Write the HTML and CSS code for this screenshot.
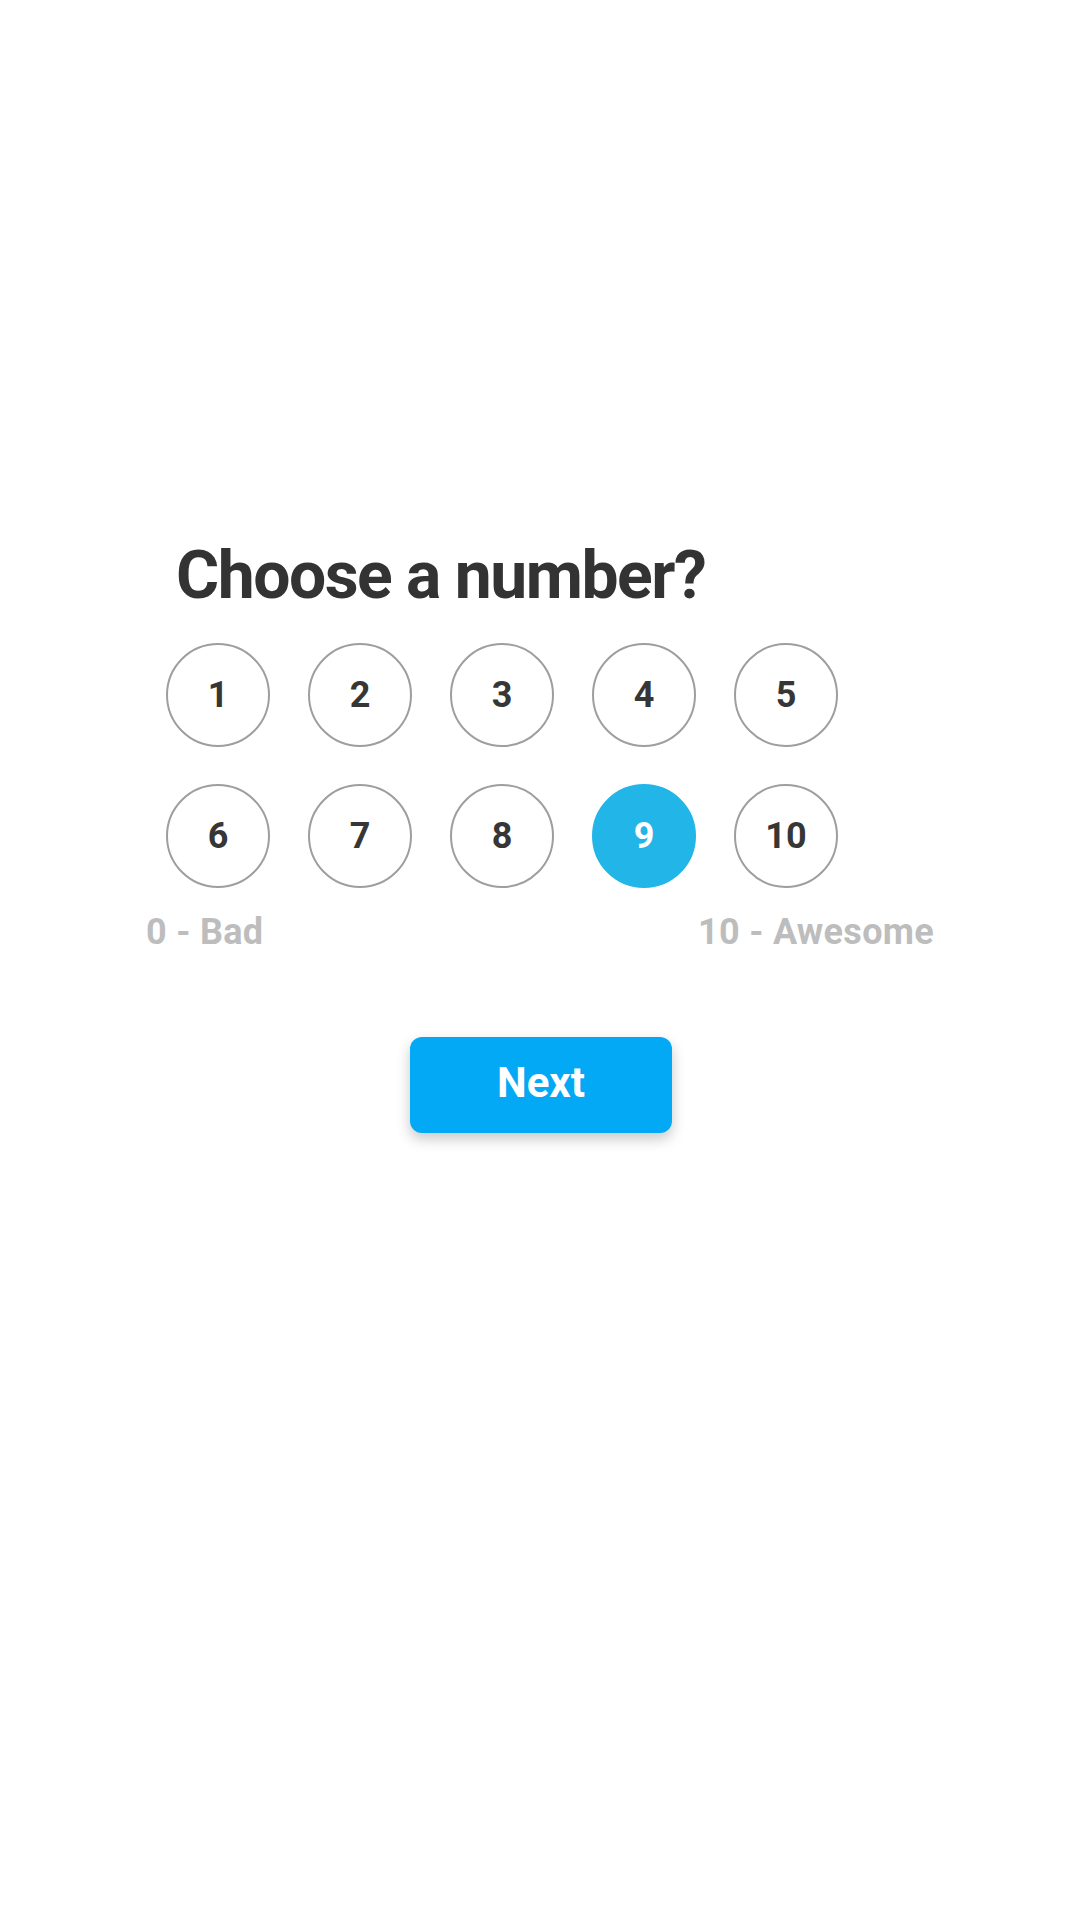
FILE: index.html
```html
<!DOCTYPE html>
<html lang="en">
<head>
<meta charset="utf-8">
<title>Choose a number</title>
<link rel="stylesheet" href="styles.css">
</head>
<body>
<main class="survey">
  <h1 class="title">Choose a number?</h1>
  <div class="choices">
    <button class="choice">1</button>
    <button class="choice">2</button>
    <button class="choice">3</button>
    <button class="choice">4</button>
    <button class="choice">5</button>
    <button class="choice">6</button>
    <button class="choice">7</button>
    <button class="choice">8</button>
    <button class="choice choice--selected">9</button>
    <button class="choice">10</button>
  </div>
  <div class="scale">
    <span>0 - Bad</span>
    <span>10 - Awesome</span>
  </div>
  <div class="actions">
    <button class="next">Next</button>
  </div>
</main>
</body>
</html>
```

FILE: styles.css
```css
html, body {
  margin: 0;
  padding: 0;
  background: #ffffff;
}

body {
  font-family: Roboto, "Liberation Sans", Arial, sans-serif;
  width: 1080px;
  height: 1920px;
}

.survey {
  width: 788px;
  margin: 0 auto;
  padding-top: 537px;
}

.title {
  margin: 0 0 28px 30px;
  font-size: 66px;
  line-height: 78px;
  font-weight: 700;
  letter-spacing: -1.5px;
  color: #333333;
}

.choices {
  display: grid;
  grid-template-columns: repeat(5, 104px);
  column-gap: 38px;
  row-gap: 37px;
  padding-left: 20px;
}

.choice {
  box-sizing: border-box;
  width: 104px;
  height: 104px;
  border-radius: 50%;
  border: 2px solid #9e9e9e;
  background: #ffffff;
  color: #363636;
  font-family: inherit;
  font-size: 36px;
  font-weight: 700;
  display: flex;
  align-items: center;
  justify-content: center;
  padding: 0;
}

.choice--selected {
  background: #22b5e8;
  border-color: #22b5e8;
  color: #ffffff;
}

.scale {
  display: flex;
  justify-content: space-between;
  margin-top: 22px;
  font-size: 36px;
  line-height: 44px;
  font-weight: 700;
  letter-spacing: 0.3px;
  color: #bdbdbd;
}

.actions {
  display: flex;
  justify-content: center;
  margin-top: 83px;
}

.next {
  width: 262px;
  height: 96px;
  border: none;
  border-radius: 12px;
  background: #03a9f4;
  color: #ffffff;
  font-family: inherit;
  font-size: 42px;
  font-weight: 700;
  padding: 0 0 6px 0;
  box-shadow: 0 6px 14px rgba(0, 0, 0, 0.22);
  margin-left: 2px;
}
```
